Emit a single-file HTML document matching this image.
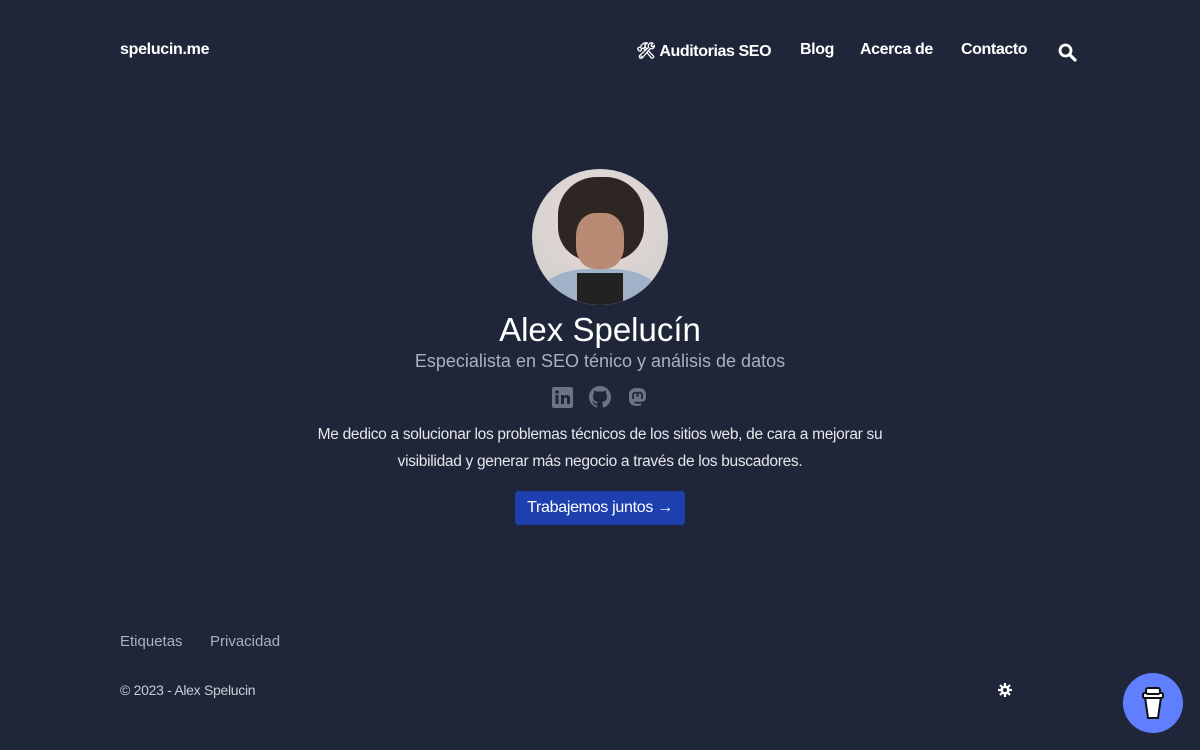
<!DOCTYPE html>
<html><head><meta charset="utf-8"><style>
*{margin:0;padding:0;box-sizing:border-box}
body{width:1200px;height:750px;background:#1f2639;font-family:"Liberation Sans",sans-serif;color:#fff;position:relative;overflow:hidden}
.a{position:absolute;white-space:nowrap}
.nav{font-size:16px;font-weight:bold;top:41px;letter-spacing:-0.4px}
</style></head><body>
<div class="a" style="left:120px;top:41px;font-size:16px;font-weight:bold;letter-spacing:-0.3px">spelucin.me</div>
<div class="a nav" style="left:636px">🛠 Auditorias SEO</div>
<div class="a nav" style="left:800px">Blog</div>
<div class="a nav" style="left:860px">Acerca de</div>
<div class="a nav" style="left:961px">Contacto</div>
<svg class="a" style="left:1058px;top:43px" width="19" height="19" viewBox="0 0 19 19"><circle cx="7.5" cy="7.5" r="5.5" fill="none" stroke="#fff" stroke-width="2.8"/><path d="M11.5 11.5L17 17" stroke="#fff" stroke-width="3.2" stroke-linecap="round"/></svg>

<div class="a" style="left:532px;top:169px;width:136px;height:136px;border-radius:50%;background:radial-gradient(circle at 50% 35%,#e8ddd8 0,#d8d2d0 60%,#c8c8cc 100%);overflow:hidden">
 <div style="position:absolute;left:26px;top:8px;width:86px;height:84px;border-radius:45% 45% 40% 40%;background:#2e2622"></div>
 <div style="position:absolute;left:44px;top:44px;width:48px;height:56px;border-radius:40%;background:#b88a74"></div>
 <div style="position:absolute;left:10px;top:100px;width:116px;height:60px;border-radius:40% 40% 0 0;background:#9fb2c8"></div>
 <div style="position:absolute;left:45px;top:104px;width:46px;height:40px;background:#222"></div>
</div>
<div class="a" style="left:0;width:1200px;text-align:center;top:311px;font-size:33px">Alex Spelucín</div>
<div class="a" style="left:0;width:1200px;text-align:center;top:351px;font-size:18px;color:#aab0bc">Especialista en SEO ténico y análisis de datos</div>
<svg class="a" style="left:552px;top:387px" width="21" height="21" viewBox="0 0 21 21"><rect width="21" height="21" rx="2" fill="#6b7487"/><rect x="3.5" y="8" width="3" height="9" fill="#1f2639"/><circle cx="5" cy="5" r="1.8" fill="#1f2639"/><path d="M9 8h3v1.5c1-2 6-2.5 6 2V17h-3v-5c0-2-3-2-3 0v5H9z" fill="#1f2639"/></svg>
<svg class="a" style="left:589px;top:386px" width="22" height="22" viewBox="0 0 16 16"><path fill="#6b7487" d="M8 0C3.580 0 0 3.58 0 8c0 3.54 2.29 6.53 5.47 7.59.4.07.55-.17.55-.38v-1.33c-2.230.48-2.7-1.07-2.7-1.07-.36-.92-.89-1.17-.89-1.17-.73-.5.06-.49.06-.49.8.06 1.23.83 1.23.83.72 1.23 1.88.87 2.34.66.07-.52.28-.87.51-1.07-1.78-.2-3.65-.89-3.65-3.95 0-.87.31-1.59.82-2.15-.08-.2-.36-1.02.08-2.12 0 0 .67-.21 2.2.82a7.6 7.6 0 014 0c1.53-1.04 2.2-.82 2.2-.82.44 1.1.16 1.92.08 2.12.51.56.82 1.27.82 2.15 0 3.07-1.87 3.75-3.65 3.95.29.25.54.73.54 1.48v2.2c0 .21.15.46.55.38A8 8 0 0016 8c0-4.42-3.58-8-8-8z"/></svg>
<svg class="a" style="left:627px;top:387px" width="21" height="21" viewBox="0 0 21 21"><path d="M10.5 1C5 1 2 3 2 8v4c0 5 3.5 7 8 7 1.5 0 3-.3 4-.8v-2c-1 .4-2.5.6-4 .5-1.7-.1-3-.8-3-2.3 3 .7 6 .6 8 .3 3-.5 4-2 4-5V8c0-5-3-7-8.5-7z" fill="#6b7487"/><path d="M6 12V8c0-1.5 1-2.5 2.3-2.5S10.5 6.5 10.5 8v2M10.5 10V8c0-1.5.9-2.5 2.2-2.5S15 6.5 15 8v4" stroke="#1f2639" stroke-width="1.8" fill="none"/></svg>
<div class="a" style="left:0;width:1200px;text-align:center;top:421px;font-size:15.5px;letter-spacing:-0.3px;line-height:27px;color:#e4e6ea">Me dedico a solucionar los problemas técnicos de los sitios web, de cara a mejorar su<br>visibilidad y generar más negocio a través de los buscadores.</div>
<div class="a" style="left:515px;top:491px;width:170px;height:34px;background:#1e40af;border-radius:4px;text-align:center;line-height:34px;font-size:16px;letter-spacing:-0.3px">Trabajemos juntos →</div>

<div class="a" style="left:120px;top:633px;font-size:15px;color:#aab0bc">Etiquetas</div>
<div class="a" style="left:210px;top:633px;font-size:15px;color:#aab0bc">Privacidad</div>
<div class="a" style="left:120px;top:682px;font-size:14px;color:#c8ccd4;letter-spacing:-0.3px">© 2023 - Alex Spelucin</div>
<svg class="a" style="left:997px;top:682px" width="16" height="16" viewBox="0 0 16 16"><g stroke="#fff" stroke-width="2.2"><path d="M8 1v14M1 8h14M3 3l10 10M13 3L3 13"/></g><circle cx="8" cy="8" r="4.5" fill="#fff"/><circle cx="8" cy="8" r="2" fill="#1f2639"/></svg>
<div class="a" style="left:1123px;top:673px;width:60px;height:60px;border-radius:50%;background:#5f7fff"></div>
<svg class="a" style="left:1140px;top:685px" width="26" height="36" viewBox="0 0 26 36"><path d="M5 12l3 21h10l3-21z" fill="#fff" stroke="#111" stroke-width="2"/><rect x="3" y="8" width="20" height="5" rx="1.5" fill="#fff" stroke="#111" stroke-width="2"/><rect x="6" y="3" width="14" height="6" rx="2" fill="#fff" stroke="#111" stroke-width="2"/></svg>
</body></html>
